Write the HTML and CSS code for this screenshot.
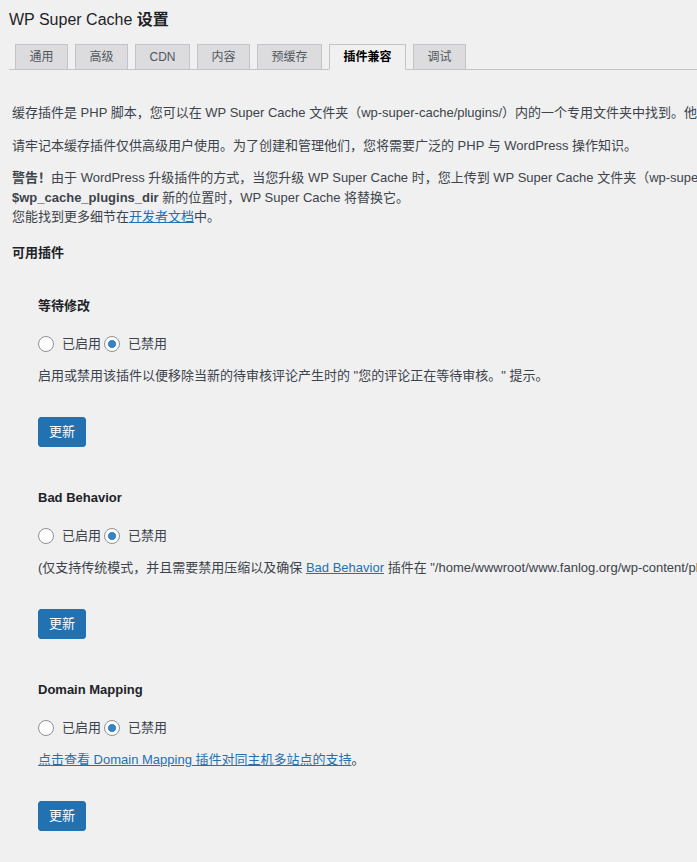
FILE: index.html
```html
<!DOCTYPE html>
<html lang="zh-CN">
<head>
<meta charset="UTF-8">
<meta name="viewport" content="width=device-width, initial-scale=1.0">
<title>WP Super Cache 设置</title>
<link rel="stylesheet" href="styles.css">
</head>
<body>
<div class="wrap">
  <h1>WP Super Cache <span class="cjk-strong">设置</span></h1>
  <nav class="nav-tab-wrapper">
    <a class="nav-tab" href="#">通用</a>
    <a class="nav-tab" href="#">高级</a>
    <a class="nav-tab" href="#">CDN</a>
    <a class="nav-tab" href="#">内容</a>
    <a class="nav-tab" href="#">预缓存</a>
    <a class="nav-tab nav-tab-active" href="#">插件兼容</a>
    <a class="nav-tab" href="#">调试</a>
  </nav>

  <div class="tab-content">
    <p>缓存插件是 PHP 脚本，您可以在 WP Super Cache 文件夹（wp-super-cache/plugins/）内的一个专用文件夹中找到。他们与 WP Super Cache 同时加载，且早于常规 WordPress 插件。</p>
    <p>请牢记本缓存插件仅供高级用户使用。为了创建和管理他们，您将需要广泛的 PHP 与 WordPress 操作知识。</p>
    <p><strong>警告！</strong>由于 WordPress 升级插件的方式，当您升级 WP Super Cache 时，您上传到 WP Super Cache 文件夹（wp-super-cache/plugins/）中的插件将被删除。您可以通过在其它位置加载插件来避免这种情况。在 wp-config.php 中设置<br>
    <strong>$wp_cache_plugins_dir</strong> 新的位置时，WP Super Cache 将替换它。<br>
    您能找到更多细节在<a href="#">开发者文档</a>中。</p>

    <h3>可用插件</h3>

    <div class="plugins">
      <form class="plugin">
        <h4>等待修改</h4>
        <div class="choices">
          <label><input type="radio" name="awaiting">已启用</label>
          <label><input type="radio" name="awaiting" checked>已禁用</label>
        </div>
        <p class="desc">启用或禁用该插件以便移除当新的待审核评论产生时的 "您的评论正在等待审核。" 提示。</p>
        <button type="submit" class="button-primary">更新</button>
      </form>

      <form class="plugin">
        <h4>Bad Behavior</h4>
        <div class="choices">
          <label><input type="radio" name="badbehavior">已启用</label>
          <label><input type="radio" name="badbehavior" checked>已禁用</label>
        </div>
        <p class="desc">(仅支持传统模式，并且需要禁用压缩以及确保 <a href="#">Bad Behavior</a> 插件在 "/home/wwwroot/www.fanlog.org/wp-content/plugins/bad-behavior/" 目录下。)</p>
        <button type="submit" class="button-primary">更新</button>
      </form>

      <form class="plugin">
        <h4>Domain Mapping</h4>
        <div class="choices">
          <label><input type="radio" name="domainmap">已启用</label>
          <label><input type="radio" name="domainmap" checked>已禁用</label>
        </div>
        <p class="desc"><a href="#">点击查看 Domain Mapping 插件对同主机多站点的支持</a>。</p>
        <button type="submit" class="button-primary">更新</button>
      </form>
    </div>
  </div>
</div>
</body>
</html>
```

FILE: styles.css
```css
html {
  overflow: hidden;
}

body {
  margin: 0;
  padding: 0;
  background-color: #f0f0f1;
  color: #3c434a;
  font-family: "Liberation Sans", "Noto Sans CJK SC", sans-serif;
  font-size: 13px;
  line-height: 1.5;
}

a {
  color: #2271b1;
}

.wrap {
  width: 1400px;
  padding-left: 9px;
}

h1 {
  margin: 9px 0 0;
  font-size: 16px;
  font-weight: 400;
  line-height: 21px;
  color: #1d2327;
}

.cjk-strong {
  font-weight: 600;
}

.nav-tab-wrapper {
  display: flex;
  gap: 7px;
  margin-top: 14px;
  padding-left: 6px;
  border-bottom: 1px solid #c3c4c7;
}

.nav-tab {
  margin-bottom: -1px;
  padding: 0 13.5px;
  line-height: 24px;
  font-size: 12px;
  color: #50575e;
  text-decoration: none;
  background-color: #dcdcde;
  border: 1px solid #c3c4c7;
}

.nav-tab-active {
  color: #000;
  font-weight: 600;
  background-color: #f0f0f1;
  border-bottom-color: #f0f0f1;
}

.tab-content {
  padding: 20px 0 0 3px;
  white-space: nowrap;
}

.tab-content p {
  margin: 13px 0;
}

h3 {
  margin: 16px 0 34px;
  font-size: 13px;
  font-weight: 600;
  color: #1d2327;
}

.plugins {
  display: flex;
  flex-direction: column;
  gap: 41px;
  padding-left: 26px;
}

.plugin {
  display: flex;
  flex-direction: column;
  align-items: flex-start;
}

h4 {
  margin: 0;
  font-size: 13px;
  font-weight: 600;
  color: #1d2327;
}

.choices {
  display: flex;
  align-items: center;
  gap: 3px;
  height: 20px;
  margin-top: 18px;
}

.choices label {
  display: inline-flex;
  align-items: center;
  cursor: pointer;
}

input[type="radio"] {
  appearance: none;
  -webkit-appearance: none;
  box-sizing: border-box;
  width: 16px;
  height: 16px;
  margin: 0 8px 0 0;
  background: #fff;
  border: 1px solid #8c8f94;
  border-radius: 50%;
}

input[type="radio"]:checked {
  background: radial-gradient(circle, #3582c4 0, #3582c4 3.6px, #fff 4.4px);
}

.tab-content .desc {
  margin: 12px 0 0;
}

.button-primary {
  margin-top: 32px;
  height: 30px;
  padding: 0 10px;
  font-family: inherit;
  font-size: 13px;
  line-height: 28px;
  color: #fff;
  background-color: #2271b1;
  border: 1px solid #2271b1;
  border-radius: 3px;
  cursor: pointer;
}
```
